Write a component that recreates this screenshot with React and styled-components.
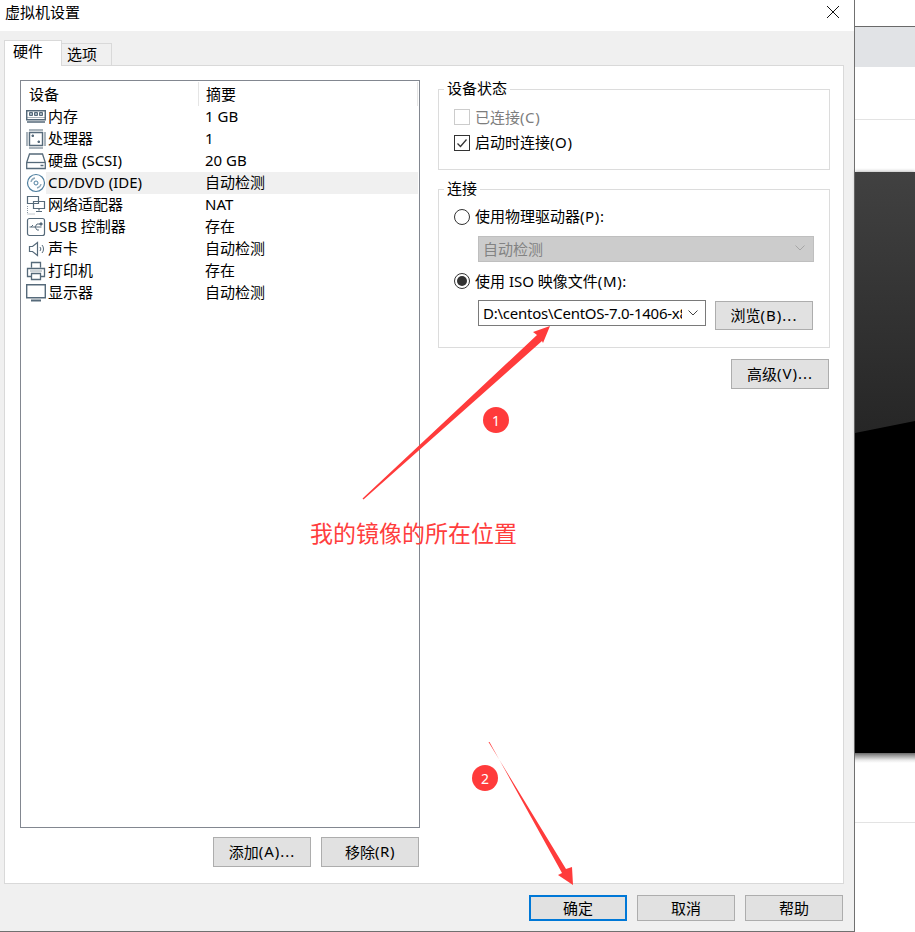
import React from "react";
import styled, { createGlobalStyle } from "styled-components";

const Global = createGlobalStyle`
  html, body { margin: 0; padding: 0; background: #fff; }
  * { box-sizing: border-box; }
  body { font-family: "Noto Sans", "Noto Sans CJK SC", sans-serif; font-size: 15px; color: #000; }
`;

const Page = styled.div`
  position: relative;
  display: flex;
  width: 915px;
  height: 932px;
  overflow: hidden;
  background: #fff;
`;

const Dialog = styled.div`
  display: flex;
  flex-direction: column;
  width: 855px;
  height: 932px;
  flex: none;
  border-right: 1px solid #707070;
  border-bottom: 1px solid #707070;
`;

const TitleBar = styled.div`
  display: flex;
  justify-content: space-between;
  align-items: flex-start;
  height: 31px;
  flex: none;
  padding: 0 15px 0 5px;
  line-height: 25px;
  background: #fff;
`;

const CloseIcon = styled.svg`
  width: 12px;
  height: 12px;
  margin-top: 6px;
`;

const Body = styled.div`
  display: flex;
  flex-direction: column;
  flex: 1;
  min-height: 0;
  padding: 9px 10px 0 4px;
  background: #f0f0f0;
`;

const Tabs = styled.div`
  display: flex;
  align-items: flex-end;
  height: 26px;
  flex: none;
  margin-bottom: -1px;
  position: relative;
  z-index: 1;
`;

const Tab = styled.div`
  height: ${(p) => (p.$active ? 26 : 23)}px;
  width: ${(p) => (p.$active ? 58 : 50)}px;
  padding-left: ${(p) => (p.$active ? 8 : 5)}px;
  line-height: ${(p) => (p.$active ? 20 : 21)}px;
  background: ${(p) => (p.$active ? "#fff" : "#f0f0f0")};
  border: 1px solid #d9d9d9;
  border-bottom: ${(p) => (p.$active ? "none" : "1px solid #d9d9d9")};
  border-left: ${(p) => (p.$active ? "1px solid #d9d9d9" : "none")};
`;

const Panel = styled.div`
  display: flex;
  gap: 18px;
  flex: 1;
  min-height: 0;
  padding: 14px 13px 16px 15px;
  background: #fff;
  border: 1px solid #d9d9d9;
`;

const LeftColumn = styled.div`
  display: flex;
  flex-direction: column;
  width: 400px;
  flex: none;
`;

const DeviceList = styled.div`
  flex: 1;
  min-height: 0;
  padding: 1px;
  background: #fff;
  border: 1px solid #828790;
`;

const ListHeader = styled.div`
  display: grid;
  grid-template-columns: 177px 1fr;
  height: 24px;
  line-height: 24px;
`;

const HeaderCell = styled.div`
  padding-left: ${(p) => p.$pad}px;
  border-right: 1px solid #e5e5e5;
`;

const Row = styled.div`
  display: flex;
  height: 22px;
`;

const IconCell = styled.div`
  display: flex;
  align-items: center;
  width: 24px;
  flex: none;
  padding-left: 4px;
  color: #566a7a;
`;

const RowBody = styled.div`
  display: grid;
  grid-template-columns: 159px 1fr;
  flex: 1;
  line-height: 20px;
  background: ${(p) => (p.$selected ? "#f0f0f0" : "transparent")};
`;

const RowLabel = styled.span`
  padding-left: 2px;
  white-space: nowrap;
`;

const ActionRow = styled.div`
  display: flex;
  justify-content: flex-end;
  gap: 10px;
  flex: none;
  margin-top: 9px;
  padding-right: 1px;
`;

const Button = styled.div`
  display: flex;
  align-items: center;
  justify-content: center;
  width: 98px;
  height: ${(p) => p.$h || 30}px;
  flex: none;
  padding-bottom: 2px;
  background: #e1e1e1;
  border: ${(p) => (p.$primary ? "2px solid #0078d7" : "1px solid #adadad")};
  white-space: nowrap;
`;

const Mnemonic = styled.span`
  letter-spacing: ${(p) => (p.$wide ? 1 : 0.6)}px;
`;

const RightColumn = styled.div`
  display: flex;
  flex-direction: column;
  flex: 1;
  min-width: 0;
  padding-top: 9px;
`;

const Group = styled.div`
  position: relative;
  height: ${(p) => p.$h}px;
  margin-bottom: ${(p) => p.$mb}px;
  padding: 14px 15px 0;
  border: 1px solid #dcdcdc;
  flex: none;
`;

const Legend = styled.span`
  position: absolute;
  top: -12px;
  left: 5px;
  padding: 0 3px;
  line-height: 20px;
  background: #fff;
`;

const OptionRow = styled.div`
  display: flex;
  align-items: center;
  height: 26px;
  margin-top: ${(p) => p.$mt || 0}px;
  line-height: 24px;
  color: ${(p) => (p.$disabled ? "#7d7d7d" : "#000")};
`;

const OptionLabel = styled.span`
  margin: 0 0 ${(p) => (p.$low ? 1 : 2)}px 5px;
`;

const CheckBox = styled.span`
  display: flex;
  align-items: center;
  justify-content: center;
  width: 16px;
  height: 16px;
  flex: none;
  background: #fff;
  border: 1px solid ${(p) => (p.$disabled ? "#cccccc" : "#333")};
`;

const Radio = styled.span`
  display: flex;
  align-items: center;
  justify-content: center;
  width: 16px;
  height: 16px;
  flex: none;
  background: #fff;
  border: 1px solid #333;
  border-radius: 50%;
  &::after {
    content: "";
    display: ${(p) => (p.$on ? "block" : "none")};
    width: 10px;
    height: 10px;
    border-radius: 50%;
    background: #333;
  }
`;

const DisabledSelect = styled.div`
  display: flex;
  align-items: center;
  justify-content: space-between;
  width: 336px;
  height: 26px;
  margin: 6px 0 0 24px;
  padding: 0 8px 2px 4px;
  color: #838383;
  background: #cccccc;
  border: 1px solid #bfbfbf;
`;

const IsoRow = styled.div`
  display: flex;
  align-items: flex-start;
  gap: 9px;
  margin: 6px 0 0 24px;
`;

const IsoSelect = styled.div`
  display: flex;
  align-items: center;
  justify-content: space-between;
  width: 228px;
  height: 26px;
  flex: none;
  padding: 0 7px 0 4px;
  background: #fff;
  border: 1px solid #7a7a7a;
`;

const IsoText = styled.span`
  width: 199px;
  overflow: hidden;
  white-space: nowrap;
  letter-spacing: -0.25px;
`;

const BrowseButton = styled(Button)`
  margin-top: 1px;
`;

const AdvancedButton = styled(Button)`
  align-self: flex-end;
  margin-right: 1px;
`;

const Footer = styled.div`
  display: flex;
  justify-content: flex-end;
  gap: 10px;
  height: 47px;
  flex: none;
  padding: 11px 1px 0 0;
`;

const Backdrop = styled.div`
  display: flex;
  flex-direction: column;
  flex: 1;
  min-width: 0;
`;

const BackTop = styled.div`
  height: 27px;
  flex: none;
  background: #fff;
  border-bottom: 1px solid #696969;
`;

const BackBar = styled.div`
  height: 40px;
  flex: none;
  background: #e1e3e6;
`;

const BackBlank = styled.div`
  height: ${(p) => p.$h}px;
  flex: none;
  background: #fff;
  border-bottom: ${(p) => (p.$line ? "1px solid #e3e3e3" : "none")};
`;

const Screen = styled.div`
  position: relative;
  height: 581px;
  flex: none;
  background: linear-gradient(#414141, #262626 45%);
  box-shadow: 0 -1px 3px rgba(0, 0, 0, 0.25);
  &::after {
    content: "";
    position: absolute;
    inset: 0;
    background: #000;
    clip-path: polygon(0 261px, 100% 249px, 100% 100%, 0 100%);
  }
`;

const ScreenShade = styled.div`
  height: 10px;
  flex: none;
  background: linear-gradient(#6e6e6e, #e8e8e8 70%, #fff);
`;

const Annotation = styled.svg`
  position: absolute;
  inset: 0;
  width: 915px;
  height: 932px;
  pointer-events: none;
`;

const Badge = styled.span`
  position: absolute;
  left: ${(p) => p.$x - 13}px;
  top: ${(p) => p.$y - 13}px;
  display: flex;
  align-items: center;
  justify-content: center;
  width: 26px;
  height: 26px;
  border-radius: 50%;
  background: #ff3b3b;
  color: #fff;
  font-size: 14px;
`;

const Caption = styled.span`
  position: absolute;
  left: 310px;
  top: 517px;
  font-size: 23px;
  line-height: 32px;
  color: #ff3d3d;
  white-space: nowrap;
`;

const Chevron = ({ color }) => (
  <svg width="10" height="6" viewBox="0 0 10 6" fill="none" stroke={color} strokeWidth="1">
    <path d="M.5.5 5 5 9.5.5" />
  </svg>
);

const base = { width: 20, height: 20, viewBox: "0 0 20 20", fill: "none", stroke: "currentColor", strokeWidth: 1 };

const MemoryIcon = () => (
  <svg {...base}>
    <path d="M.7 3.7h18.6v9H.7zM1 15h18" strokeWidth="1.5" />
    <path d="M3.5 5.5h3v3h-3zM8.5 5.5h3v3h-3zM13.5 5.5h3v3h-3z" fill="#9fb0bc" />
    <path d="M1 10.5h18" opacity=".5" />
  </svg>
);
const CpuIcon = () => (
  <svg {...base}>
    <path d="M3.6 3.6h12.8v12.8H3.6z" strokeWidth="1.2" />
    <path d="M4 0v2.5M6 0v2.5M8 0v2.5M10 0v2.5M12 0v2.5M14 0v2.5M16 0v2.5M4 17.5V20M6 17.5V20M8 17.5V20M10 17.5V20M12 17.5V20M14 17.5V20M16 17.5V20M0 4h2.5M0 6h2.5M0 8h2.5M0 10h2.5M0 12h2.5M0 14h2.5M0 16h2.5M17.5 4H20M17.5 6H20M17.5 8H20M17.5 10H20M17.5 12H20M17.5 14H20M17.5 16H20" />
    <path d="M6 6h1.5v1.5H6zM12 12h1.5v1.5H12z" fill="currentColor" />
  </svg>
);
const DiskIcon = () => (
  <svg {...base}>
    <path d="M.7 11.5 3.5 3h13l2.8 8.5v6H.7z" strokeWidth="1.3" />
    <path d="M1 11.5h18" strokeWidth="1.3" />
    <path d="M14.5 14.5h3" strokeWidth="1.5" />
  </svg>
);
const DiscIcon = () => (
  <svg {...base} style={{ color: "#4f7f9f" }}>
    <circle cx="10" cy="10" r="8.5" strokeWidth="1.2" />
    <circle cx="10" cy="10" r="2" />
    <path d="M5 9a5 5 0 0 1 4-4M15 11a5 5 0 0 1-4 4" stroke="#8fa9ba" strokeWidth="1.3" />
  </svg>
);
const NetIcon = () => (
  <svg {...base}>
    <path d="M1.5 1.5h11v7h-11zM7.5 6.5h11v7h-11z" fill="#fff" strokeWidth="1.2" />
    <path d="M13 13.5v2M10 16.5h6" strokeWidth="1.2" />
    <path d="M1.5 11v8h7" strokeDasharray="1 1" opacity=".7" />
  </svg>
);
const UsbIcon = () => (
  <svg {...base}>
    <rect x="1.5" y="1.5" width="17" height="17" rx="2" strokeWidth="1.2" />
    <path d="M3.5 10h12M5 10l2-2M9 10l2-3h3M9 10l2 3h2" />
    <path d="M14 6h2v2h-2z" fill="currentColor" />
  </svg>
);
const SpeakerIcon = () => (
  <svg {...base}>
    <path d="M3.5 7.5h3l5-4v13l-5-4h-3z" strokeWidth="1.2" />
    <path d="M14 8a3 3 0 0 1 0 4M16 6a6 6 0 0 1 0 8" />
  </svg>
);
const PrinterIcon = () => (
  <svg {...base}>
    <path d="M5.5 6.5v-5h9v5M5.5 15.5h-4v-8h17v8h-4" strokeWidth="1.3" />
    <path d="M5.5 12.5h9v6h-9z" strokeWidth="1.3" />
    <path d="M4 10h12" opacity=".6" />
  </svg>
);
const MonitorIcon = () => (
  <svg {...base}>
    <path d="M.7 1.7h18.6v13H.7z" strokeWidth="1.4" />
    <path d="M5 17.5h10" strokeWidth="2" />
  </svg>
);

const devices = [
  { Icon: MemoryIcon, name: "内存", sum: "1 GB" },
  { Icon: CpuIcon, name: "处理器", sum: "1" },
  { Icon: DiskIcon, name: "硬盘 (SCSI)", sum: "20 GB" },
  { Icon: DiscIcon, name: "CD/DVD (IDE)", sum: "自动检测", selected: true },
  { Icon: NetIcon, name: "网络适配器", sum: "NAT" },
  { Icon: UsbIcon, name: "USB 控制器", sum: "存在" },
  { Icon: SpeakerIcon, name: "声卡", sum: "自动检测" },
  { Icon: PrinterIcon, name: "打印机", sum: "存在" },
  { Icon: MonitorIcon, name: "显示器", sum: "自动检测" },
];

export default function App() {
  return (
    <Page>
      <Global />
      <Dialog>
        <TitleBar>
          <span>虚拟机设置</span>
          <CloseIcon viewBox="0 0 12 12" fill="none" stroke="#111" strokeWidth="1">
            <path d="M0 0 12 12M12 0 0 12" />
          </CloseIcon>
        </TitleBar>
        <Body>
          <Tabs>
            <Tab $active>硬件</Tab>
            <Tab>选项</Tab>
          </Tabs>
          <Panel>
            <LeftColumn>
              <DeviceList>
                <ListHeader>
                  <HeaderCell $pad={7}>设备</HeaderCell>
                  <HeaderCell $pad={7}>摘要</HeaderCell>
                </ListHeader>
                {devices.map(({ Icon, name, sum, selected }) => (
                  <Row key={name}>
                    <IconCell>
                      <Icon />
                    </IconCell>
                    <RowBody $selected={selected}>
                      <RowLabel>{name}</RowLabel>
                      <span>{sum}</span>
                    </RowBody>
                  </Row>
                ))}
              </DeviceList>
              <ActionRow>
                <Button>添加<Mnemonic $wide>(A)...</Mnemonic></Button>
                <Button>移除<Mnemonic>(R)</Mnemonic></Button>
              </ActionRow>
            </LeftColumn>
            <RightColumn>
              <Group $h={81} $mb={19}>
                <Legend>设备状态</Legend>
                <OptionRow $disabled>
                  <CheckBox $disabled />
                  <OptionLabel $low>已连接<Mnemonic>(C)</Mnemonic></OptionLabel>
                </OptionRow>
                <OptionRow>
                  <CheckBox>
                    <svg width="14" height="14" viewBox="0 0 14 14" fill="none" stroke="#333" strokeWidth="1.3">
                      <path d="M2.5 7.5 5.5 10.5 11.5 3.5" />
                    </svg>
                  </CheckBox>
                  <OptionLabel>启动时连接<Mnemonic>(O)</Mnemonic></OptionLabel>
                </OptionRow>
              </Group>
              <Group $h={159} $mb={11}>
                <Legend>连接</Legend>
                <OptionRow>
                  <Radio />
                  <OptionLabel>使用物理驱动器<Mnemonic>(P):</Mnemonic></OptionLabel>
                </OptionRow>
                <DisabledSelect>
                  自动检测
                  <Chevron color="#a6a6a6" />
                </DisabledSelect>
                <OptionRow $mt={6}>
                  <Radio $on />
                  <OptionLabel $low>使用 ISO 映像文件<Mnemonic>(M):</Mnemonic></OptionLabel>
                </OptionRow>
                <IsoRow>
                  <IsoSelect>
                    <IsoText>D:\centos\CentOS-7.0-1406-x86_64-DVD.iso</IsoText>
                    <Chevron color="#444" />
                  </IsoSelect>
                  <BrowseButton $h={29}>浏览<Mnemonic $wide>(B)...</Mnemonic></BrowseButton>
                </IsoRow>
              </Group>
              <AdvancedButton>高级<Mnemonic $wide>(V)...</Mnemonic></AdvancedButton>
            </RightColumn>
          </Panel>
          <Footer>
            <Button $primary $h={26}>确定</Button>
            <Button $h={26}>取消</Button>
            <Button $h={26}>帮助</Button>
          </Footer>
        </Body>
      </Dialog>
      <Backdrop>
        <BackTop />
        <BackBar />
        <BackBlank $h={53} $line />
        <BackBlank $h={52} />
        <Screen />
        <ScreenShade />
        <BackBlank $h={60} $line />
      </Backdrop>
      <Annotation viewBox="0 0 915 932">
        <polygon points="362.5,498.5 537,335 533,332 550,326 543,343 542,341 363.5,499.5" fill="#ff3b3b" />
        <polygon points="488.5,742 566,869 572,867 573,885 558,875 562,873 489.5,742" fill="#ff3b3b" />
      </Annotation>
      <Badge $x={496} $y={420}>1</Badge>
      <Badge $x={485} $y={778}>2</Badge>
      <Caption>我的镜像的所在位置</Caption>
    </Page>
  );
}
